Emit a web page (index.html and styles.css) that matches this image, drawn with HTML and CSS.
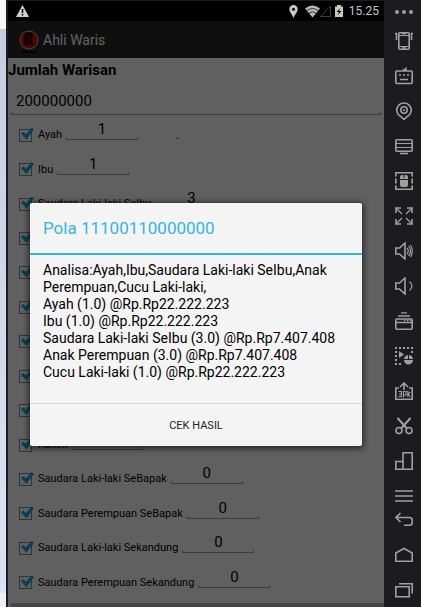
FILE: index.html
```html
<!DOCTYPE html>
<html lang="id">

	<head>
		<meta charset="UTF-8">
		<title>Ahli Waris</title>
		<link rel="stylesheet" href="styles.css">
	</head>

	<body>
		<div class="desktop"></div>
		<div class="phone">
			<div class="status">
				<svg class="warn" width="13" height="12" viewBox="0 0 13 12"><path fill="#d0d0d0" d="M6.5 0L13 12H0z"/><path fill="#000" d="M5.7 4h1.6v4H5.7zM5.7 9h1.6v1.5H5.7z"/></svg>
				<svg width="9" height="13" viewBox="0 0 9 13"><path fill="#c8c8c8" fill-rule="evenodd" d="M4.500 0a4.200 4.200 0 0 1 4.200 4.200C8.700 7 5.500 10 4.500 13 3.500 10 .3 7 .3 4.200A4.200 4.200 0 0 1 4.500 0zM4.500 2.800a1.500 1.500 0 1 0 0 3 1.500 1.500 0 0 0 0-3z"/></svg>
				<svg class="signal" width="27" height="13" viewBox="0 0 27 13"><path fill="#b8b8b8" d="M0 3.500Q7.500-2.500 15 3.500L7.500 12.500z"/><path fill="none" stroke="#000" stroke-width=".7" d="M2 5.500q5.500-4 11 0M4 8q3.500-2.500 7 0"/><path fill="none" stroke="#3c3c3c" d="M15.500 11.500h10V1z"/></svg>
				<svg width="8" height="12" viewBox="0 0 8 12"><path fill="#c8c8c8" d="M0 1.500h2V0h4v1.500h2V12H0z"/><path fill="#000" d="M5.500 3L1.500 7H4l-1.500 3.500L6.500 6H4z"/></svg>
				<span class="time">15.25</span>
			</div>
			<div class="screen">
				<header class="bar">
					<svg width="20" height="24" viewBox="0 0 20 24"><circle cx="10" cy="10" r="9" fill="#dc0000" stroke="#c8b4b4"/><path fill="#500" stroke="#000" stroke-width="2" d="M6.500 3.500h6v10h-6z"/><path fill="none" stroke="#000" stroke-width="1.500" d="M8 6h3M8 9h3M5 14h8l2 1.500"/><path stroke="#000" stroke-width="2" stroke-dasharray="3 1" d="M3 22h14"/></svg>
					<h1>Ahli Waris</h1>
				</header>
				<label class="total-label" for="total">Jumlah Warisan</label>
				<input class="line total" id="total" type="text" value="200000000">
				<div class="list">
					<div class="row"><label><input type="checkbox" checked>Ayah</label><input class="line" aria-label="Jumlah Ayah" value="1"><span class="dot">.</span></div>
					<div class="row"><label><input type="checkbox" checked>Ibu</label><input class="line" aria-label="Jumlah Ibu" value="1"></div>
					<div class="row"><label><input type="checkbox" checked>Saudara Laki-laki SeIbu</label><input class="line" aria-label="Jumlah Saudara Laki-laki SeIbu" value="3"></div>
					<div class="row"><input type="checkbox" aria-label="Saudara Perempuan SeIbu" checked></div>
					<div class="row"><input type="checkbox" aria-label="Anak Laki-laki" checked></div>
					<div class="row"><input type="checkbox" aria-label="Anak Perempuan" checked></div>
					<div class="row"><input type="checkbox" aria-label="Cucu Laki-laki" checked></div>
					<div class="row"><input type="checkbox" aria-label="Cucu Perempuan" checked></div>
					<div class="row"><input type="checkbox" aria-label="Nenek" checked></div>
					<div class="row"><label><input type="checkbox" checked>Kakek</label><input class="line" aria-label="Jumlah Kakek"></div>
					<div class="row"><label><input type="checkbox" checked>Saudara Laki-laki SeBapak</label><input class="line" aria-label="Jumlah Saudara Laki-laki SeBapak" value="0"></div>
					<div class="row"><label><input type="checkbox" checked>Saudara Perempuan SeBapak</label><input class="line" aria-label="Jumlah Saudara Perempuan SeBapak" value="0"></div>
					<div class="row"><label><input type="checkbox" checked>Saudara Laki-laki Sekandung</label><input class="line" aria-label="Jumlah Saudara Laki-laki Sekandung" value="0"></div>
					<div class="row"><label><input type="checkbox" checked>Saudara Perempuan Sekandung</label><input class="line" aria-label="Jumlah Saudara Perempuan Sekandung" value="0"></div>
				</div>
				<div class="next"></div>
				<!-- dialog hasil -->
				<div class="scrim">
					<div class="dialog" role="dialog" aria-labelledby="pola">
						<h2 id="pola">Pola 11100110000000</h2>
						<p>Analisa:Ayah,Ibu,Saudara Laki-laki SeIbu,Anak Perempuan,Cucu Laki-laki,<br>Ayah (1.0) @Rp.Rp22.222.223<br>Ibu (1.0) @Rp.Rp22.222.223<br>Saudara Laki-laki SeIbu (3.0) @Rp.Rp7.407.408<br>Anak Perempuan (3.0) @Rp.Rp7.407.408<br>Cucu Laki-laki (1.0) @Rp.Rp22.222.223</p>
						<button type="button">CEK HASIL</button>
					</div>
				</div>
			</div>
		</div>
		<!-- toolbar emulator -->
		<nav class="tools">
			<button class="more" aria-label="Lainnya"><svg viewBox="0 0 18 18"><g class="fill"><circle cx="2" cy="9" r="2"/><circle cx="9" cy="9" r="2"/><circle cx="16" cy="9" r="2"/></g></svg></button>
			<button aria-label="Goyang"><svg viewBox="0 0 18 18"><rect x="3.800" y=".8" width="10.400" height="16.400" rx="1"/><path d="M4 3.500h10M4 14.500h10" stroke-width="1"/><path d="M7 1.500h4M7 16h4M0 1.500h1.500V8M18 1.500h-1.500V8" /></svg></button>
			<button aria-label="Keyboard"><svg viewBox="0 0 18 18"><rect x=".8" y="4" width="16.400" height="12.500" rx="1"/><path d="M9 4V2.500h2V.5M4 8h2M8 8h2M12 8h2M5 12.500h8"/></svg></button>
			<button aria-label="Lokasi"><svg viewBox="0 0 18 18"><path d="M9 17.500l-3-2.800A7.200 7.200 0 1 1 12 14.700z"/><circle cx="9" cy="8" r="3.200"/><circle class="fill" cx="9" cy="8" r="1"/></svg></button>
			<button aria-label="Layar"><svg viewBox="0 0 18 18"><rect x=".8" y="2.800" width="16.400" height="11.400" rx="1"/><path d="M1 6.500h16M1 10.500h16" stroke-width="1"/><path d="M5 16.500h8"/></svg></button>
			<button aria-label="Mouse"><svg viewBox="0 0 18 18"><path d="M.8.8h16.400v16.400H.8z"/><path class="gap" d="M.8 4.500v2M.8 11.500v2M17.200 4.500v2M17.200 11.500v2"/><path class="fill" d="M5 7V5a2 2 0 0 1 2-2h1.500v3h1V3H11a2 2 0 0 1 2 2v2zM5 8h8v5a2 2 0 0 1-2 2H7a2 2 0 0 1-2-2z"/></svg></button>
			<button aria-label="Layar penuh"><svg viewBox="0 0 18 18"><path d="M1 6V1h5M12 1h5v5M17 12v5h-5M6 17H1v-5"/><path stroke-width="1.200" d="M1 1l6 6M17 1l-6 6M17 17l-6-6M1 17l6-6"/></svg></button>
			<button aria-label="Volume naik"><svg viewBox="0 0 18 18"><path d="M.8 6h3.700L10 1v16l-5.500-5H.8z"/><path stroke-width="1.200" d="M12 6q2.500 3 0 6M13.500 4q4 5 0 10M15.500 3q3.500 6 0 12"/></svg></button>
			<button aria-label="Volume turun"><svg viewBox="0 0 18 18"><path d="M.8 6h3.700L10 1v16l-5.500-5H.8z"/><path stroke-width="1.200" d="M14.500 4.500q5 4.500 0 9"/></svg></button>
			<button aria-label="Jendela"><svg viewBox="0 0 18 18"><rect x=".8" y="7" width="16.400" height="10.200" rx="1"/><path stroke-width="1.300" d="M6 .8h6M3 4h12M1 10.500h16"/><path d="M9 8.500h1.500M12 8.500h1.500M15 8.500h1.500"/></svg></button>
			<button aria-label="Perekam"><svg viewBox="0 0 18 18"><path stroke-width="2" stroke-dasharray="2 2" d="M0 1h18M1 4v14M4 17h4M17 4v3"/><path class="fill" d="M4 4l5 3.500L4 11zM9 12a4.500 4.500 0 0 1 4-4v4zM14 8a4.500 4.500 0 0 1 4 4h-4zM9 13h9a4.500 4.500 0 0 1-9 0z"/></svg></button>
			<button aria-label="Pasang APK"><svg viewBox="0 0 18 18"><path d="M4 6H.8v11.200h16.400V6H14M9 8V1.500M5 5l4-4 4 4"/><path stroke-width="1.100" d="M3.500 9.500h3v5h-3M4 12h2.500M8.500 15.500v-6h2.500v3.500H8.500M12.800 8.500v6.500M15.200 10l-2 2 2 3"/></svg></button>
			<button aria-label="Potong"><svg viewBox="0 0 18 18"><path d="M2.500 1l9 10M15.500 1l-9 10" stroke-width="2"/><circle cx="4" cy="13.500" r="3"/><circle cx="14" cy="13.500" r="3"/></svg></button>
			<button aria-label="Putar"><svg viewBox="0 0 18 18"><path d="M8 17.200V.8h9.200v16.400H.8V9.500H8"/></svg></button>
			<button aria-label="Menu"><svg viewBox="0 0 18 18"><path d="M0 4h18M0 9h18M0 14h18"/></svg></button>
			<button class="back" aria-label="Kembali"><svg viewBox="0 0 18 18"><path d="M5.500 2L1 6.500 5.500 11M1 6.500h13.500a2.700 2.700 0 0 1 2.700 2.700v2.300a2.700 2.700 0 0 1-2.700 2.700H9"/></svg></button>
			<button aria-label="Beranda"><svg viewBox="0 0 18 18"><path d="M.8 15.200V7L9 2.500 17.200 7v8.200z"/></svg></button>
			<button aria-label="Aplikasi terbaru"><svg viewBox="0 0 18 18"><path d="M.8 5.800h13.400v10H.8zM4 2.800h13.200v9.700"/></svg></button>
		</nav>
	</body>

</html>
```
FILE: styles.css
```css
* {
	box-sizing: border-box;
	margin: 0;
	padding: 0;
}

body {
	display: flex;
	height: 100vh;
	overflow: hidden;
	background: #1c1b20;
	color: #000;
	font: 12px Roboto, sans-serif;
}

svg {
	display: block;
	flex: none;
}

.desktop {
	width: 6px;
	background: linear-gradient(#f8f8f8 29px, transparent 29px), linear-gradient(transparent 593px, #f0f0f0 593px), linear-gradient(#c3cde0, #d9e5f4);
}

.phone {
	flex: 1;
	display: flex;
	flex-direction: column;
	margin-left: 2px;
}

.status {
	flex: none;
	display: flex;
	align-items: center;
	height: 21px;
	padding: 0 5px 0 8px;
	border-top: 1px solid #1c1b20;
	background: #000;
	color: #c4c4c4;
}

.warn {
	margin-right: auto;
}

.signal {
	margin: 0 3px 0 7px;
}

.time {
	margin-left: 6px;
}

.screen {
	position: relative;
	flex: 1;
	display: flex;
	flex-direction: column;
	min-height: 0;
	background: #f0f0f0;
}

.bar {
	flex: none;
	display: flex;
	align-items: center;
	height: 37px;
	padding: 4px 0 0 11px;
	background: #262626;
	color: #f4f4f4;
}

h1 {
	margin: -4px 0 0 4px;
	font-size: 14px;
	font-weight: normal;
}

.total-label {
	padding-top: 2px;
	font-size: 15px;
	font-weight: bold;
	line-height: 20px;
}

/* garis bawah dengan ujung kecil */
.line {
	flex: none;
	width: 72px;
	height: 22px;
	border: 0;
	background: linear-gradient(#999, #999) 0 100% / 100% 1px no-repeat, linear-gradient(#999, #999) 0 100% / 1px 3px no-repeat, linear-gradient(#999, #999) 100% 100% / 1px 3px no-repeat;
	font: 15px Roboto, sans-serif;
	text-align: center;
}

.total {
	width: auto;
	height: 35px;
	margin: 0 3px;
	padding: 6px 5px 0;
	text-align: left;
}

.list {
	flex: 1;
	display: grid;
	grid-auto-rows: 1fr;
	padding: 3px 0 3px 11px;
}

.row {
	display: flex;
	align-items: center;
	min-height: 0;
}

.row label {
	display: flex;
	align-items: center;
	margin-right: 4px;
	font-size: 11px;
	line-height: 14px;
}

.row .line {
	margin-bottom: 12px;
}

.dot {
	margin-left: 38px;
}

input[type="checkbox"] {
	position: relative;
	width: 13px;
	height: 13px;
	margin-right: 6px;
	border: 1px solid #808080;
	appearance: none;
}

input[type="checkbox"]:checked::after {
	content: "";
	position: absolute;
	left: 1px;
	top: -2px;
	width: 13px;
	height: 12px;
	background: #0ea0dc;
	clip-path: polygon(0 50%, 18% 34%, 38% 54%, 82% 0, 100% 14%, 42% 100%);
}

.next {
	flex: none;
	height: 4px;
	margin-left: 3px;
	background: #b0b0b0;
}

.scrim {
	position: absolute;
	inset: 0;
	padding: 182px 22px 0;
	background: rgba(0, 0, 0, .6);
}

.dialog {
	border-radius: 2px;
	background: #f4f4f4;
	box-shadow: 0 1px 6px 1px rgba(0, 0, 0, .7);
}

h2 {
	padding: 0 13px;
	border-bottom: 2px solid #33b5e5;
	color: #33b5e5;
	font-size: 17px;
	font-weight: normal;
	line-height: 50px;
}

.dialog p {
	padding: 7px 13px 22px;
	font-size: 14px;
	line-height: 17px;
}

.dialog button {
	display: block;
	width: 100%;
	height: 43px;
	border: 0;
	border-top: 1px solid #d8d8d8;
	background: none;
	color: #222;
	font: 11px Roboto, sans-serif;
}

.tools {
	display: flex;
	flex-direction: column;
	align-items: center;
	width: 37px;
	padding-right: 1px;
	padding-left: 4px;
}

.tools button {
	flex: none;
	height: 35px;
	border: 0;
	background: none;
}

.tools .more {
	height: 23px;
}

.tools .back {
	margin-top: -11px;
}

.tools svg {
	width: 18px;
	height: 18px;
	fill: none;
	stroke: #a0a0a0;
	stroke-width: 1.6px;
}

.tools svg .fill {
	fill: #a0a0a0;
	stroke: none;
}

.tools svg .gap {
	stroke: #1c1b20;
	stroke-width: 2px;
}
```
